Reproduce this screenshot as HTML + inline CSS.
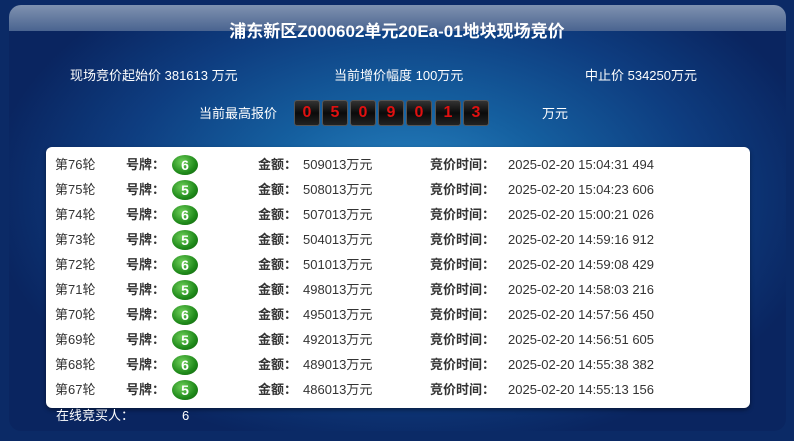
<!DOCTYPE html>
<html><head><meta charset="utf-8"><style>
*{margin:0;padding:0;box-sizing:border-box}
body{width:794px;height:441px;overflow:hidden;background:#0b2a66;font-family:"Liberation Sans","Noto Sans CJK SC",sans-serif;position:relative}
.panel{position:absolute;left:9px;top:5px;width:777px;height:426px;border-radius:12px;background:radial-gradient(ellipse 420px 260px at 400px 190px,#2a86c4 0%,#1560a0 35%,#0e3d80 70%,#0a2560 100%);overflow:hidden}
.hdr{position:absolute;left:0;top:0;width:100%;height:26px;background:linear-gradient(#7f92b0,#4a6490)}
.t{position:absolute;color:#fff;white-space:nowrap;line-height:20px}
.title{left:0;width:794px;text-align:center;top:22px;font-size:17px;font-weight:bold}
.box{position:absolute;left:46px;top:147px;width:704px;height:261px;background:#fff;border-radius:6px;box-shadow:0 2px 4px rgba(0,0,0,.4)}
.row{position:absolute;left:0;height:25px;width:100%;font-size:13px;color:#333;line-height:25px}
.row span{position:absolute;top:0;white-space:nowrap;line-height:25px}
.b{font-weight:bold}
.ball{position:absolute;left:126px;top:3px;width:26px;height:20px;border-radius:50%;background:radial-gradient(ellipse at 40% 35%,#6fd05a,#1f8a1a 60%,#0d5a0a);color:#fff;font-weight:bold;font-size:14px;text-align:center;line-height:20px}
.dg{position:absolute;top:100px;width:26px;height:26px;background:linear-gradient(#333,#0a0a0a 50%,#222);border-radius:3px;border:1px solid #555;color:#e01010;font-weight:bold;font-size:16px;text-align:center;line-height:24px}
</style></head><body>
<div class="panel"><div class="hdr"></div></div>
<div class="t title">浦东新区Z000602单元20Ea-01地块现场竞价</div>
<div class="t" style="left:70px;top:66px;font-size:13px">现场竞价起始价 381613 万元</div>
<div class="t" style="left:334px;top:66px;font-size:13px">当前增价幅度 100万元</div>
<div class="t" style="left:585px;top:66px;font-size:13px">中止价 534250万元</div>
<div class="t" style="left:199px;top:104px;font-size:13px">当前最高报价</div>
<div class="dg" style="left:294px">0</div><div class="dg" style="left:322px">5</div><div class="dg" style="left:350px">0</div><div class="dg" style="left:378px">9</div><div class="dg" style="left:406px">0</div><div class="dg" style="left:435px">1</div><div class="dg" style="left:463px">3</div>
<div class="t" style="left:542px;top:104px;font-size:13px">万元</div>
<div class="box">
<div class="row" style="top:5px"><span style="left:9px">第76轮</span><span class="b" style="left:80px">号牌：</span><div class="ball">6</div><span class="b" style="left:212px">金额：</span><span style="left:257px">509013万元</span><span class="b" style="left:384px">竞价时间：</span><span style="left:462px">2025-02-20 15:04:31 494</span></div>
<div class="row" style="top:30px"><span style="left:9px">第75轮</span><span class="b" style="left:80px">号牌：</span><div class="ball">5</div><span class="b" style="left:212px">金额：</span><span style="left:257px">508013万元</span><span class="b" style="left:384px">竞价时间：</span><span style="left:462px">2025-02-20 15:04:23 606</span></div>
<div class="row" style="top:55px"><span style="left:9px">第74轮</span><span class="b" style="left:80px">号牌：</span><div class="ball">6</div><span class="b" style="left:212px">金额：</span><span style="left:257px">507013万元</span><span class="b" style="left:384px">竞价时间：</span><span style="left:462px">2025-02-20 15:00:21 026</span></div>
<div class="row" style="top:80px"><span style="left:9px">第73轮</span><span class="b" style="left:80px">号牌：</span><div class="ball">5</div><span class="b" style="left:212px">金额：</span><span style="left:257px">504013万元</span><span class="b" style="left:384px">竞价时间：</span><span style="left:462px">2025-02-20 14:59:16 912</span></div>
<div class="row" style="top:105px"><span style="left:9px">第72轮</span><span class="b" style="left:80px">号牌：</span><div class="ball">6</div><span class="b" style="left:212px">金额：</span><span style="left:257px">501013万元</span><span class="b" style="left:384px">竞价时间：</span><span style="left:462px">2025-02-20 14:59:08 429</span></div>
<div class="row" style="top:130px"><span style="left:9px">第71轮</span><span class="b" style="left:80px">号牌：</span><div class="ball">5</div><span class="b" style="left:212px">金额：</span><span style="left:257px">498013万元</span><span class="b" style="left:384px">竞价时间：</span><span style="left:462px">2025-02-20 14:58:03 216</span></div>
<div class="row" style="top:155px"><span style="left:9px">第70轮</span><span class="b" style="left:80px">号牌：</span><div class="ball">6</div><span class="b" style="left:212px">金额：</span><span style="left:257px">495013万元</span><span class="b" style="left:384px">竞价时间：</span><span style="left:462px">2025-02-20 14:57:56 450</span></div>
<div class="row" style="top:180px"><span style="left:9px">第69轮</span><span class="b" style="left:80px">号牌：</span><div class="ball">5</div><span class="b" style="left:212px">金额：</span><span style="left:257px">492013万元</span><span class="b" style="left:384px">竞价时间：</span><span style="left:462px">2025-02-20 14:56:51 605</span></div>
<div class="row" style="top:205px"><span style="left:9px">第68轮</span><span class="b" style="left:80px">号牌：</span><div class="ball">6</div><span class="b" style="left:212px">金额：</span><span style="left:257px">489013万元</span><span class="b" style="left:384px">竞价时间：</span><span style="left:462px">2025-02-20 14:55:38 382</span></div>
<div class="row" style="top:230px"><span style="left:9px">第67轮</span><span class="b" style="left:80px">号牌：</span><div class="ball">5</div><span class="b" style="left:212px">金额：</span><span style="left:257px">486013万元</span><span class="b" style="left:384px">竞价时间：</span><span style="left:462px">2025-02-20 14:55:13 156</span></div>
</div>
<div class="t" style="left:56px;top:406px;font-size:13px">在线竞买人：</div>
<div class="t" style="left:182px;top:406px;font-size:13px">6</div>
</body></html>
